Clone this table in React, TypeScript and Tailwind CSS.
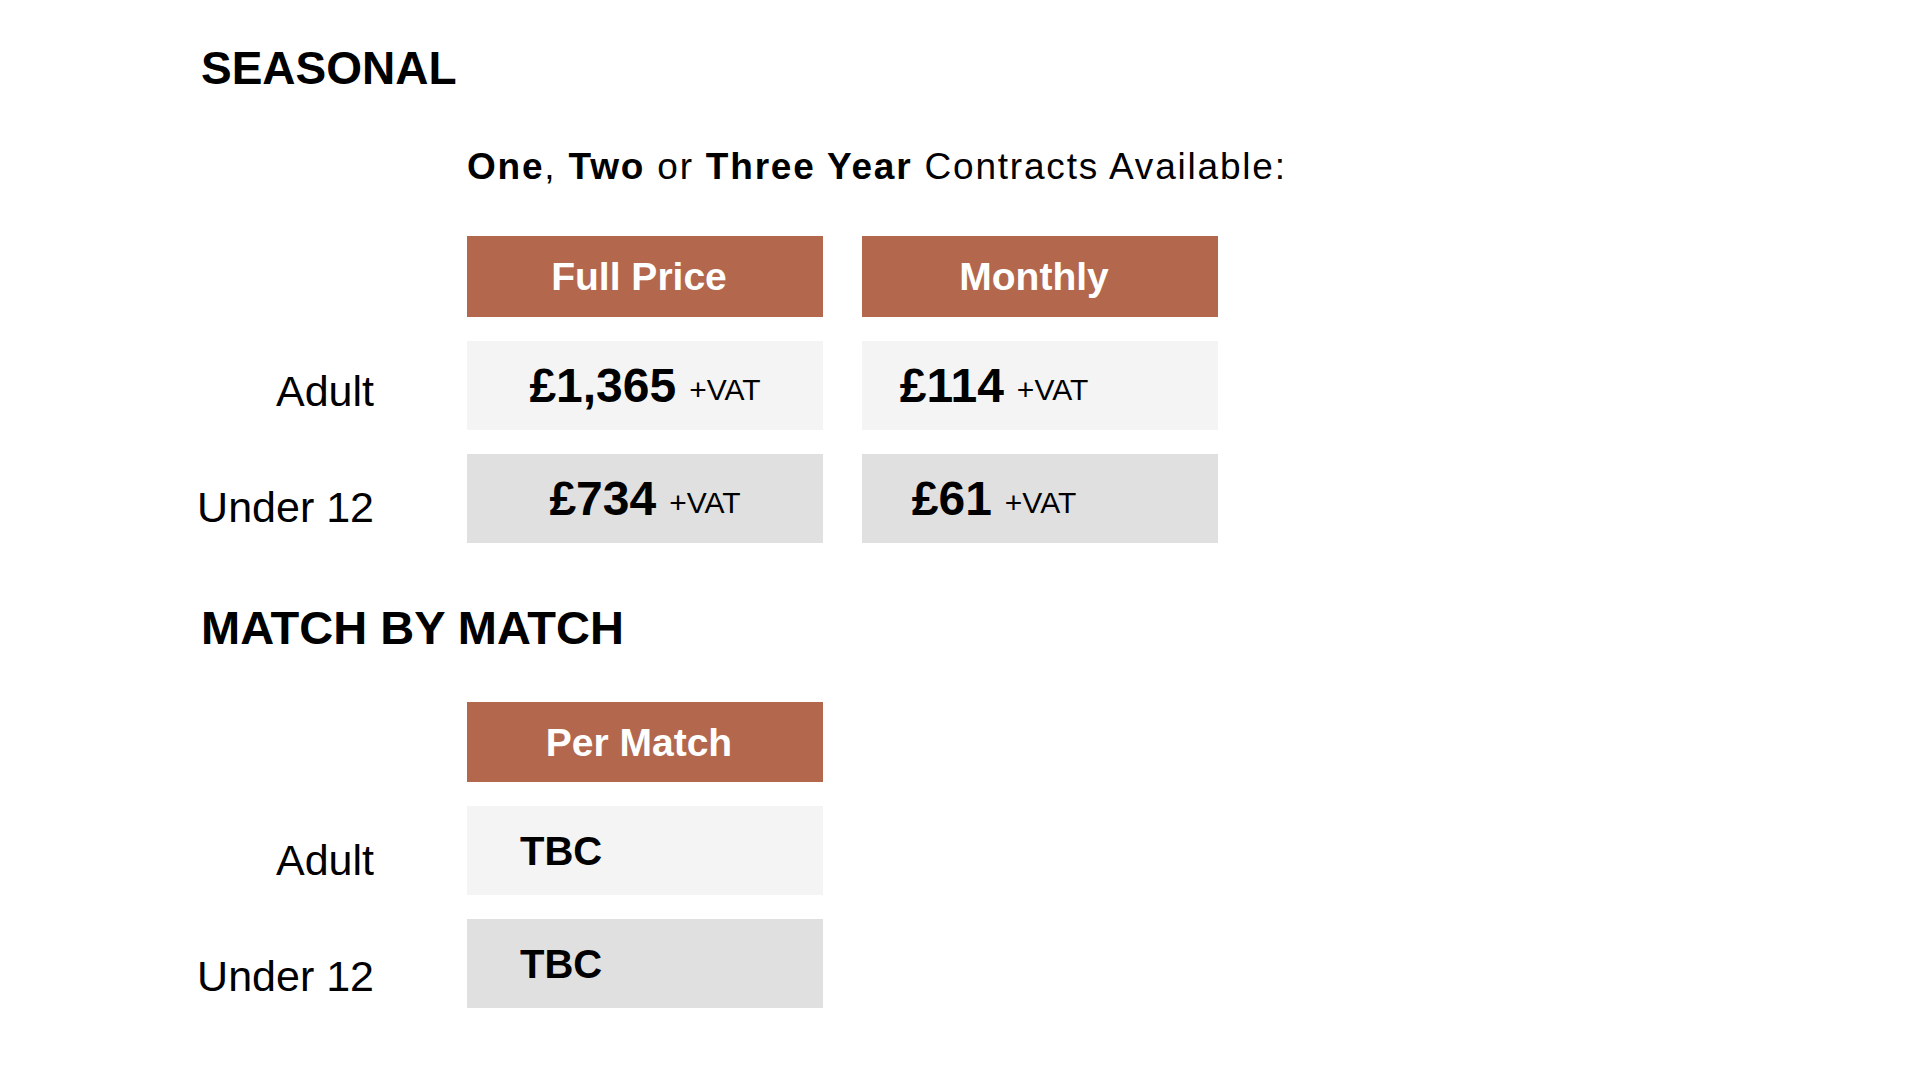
const font = { fontFamily: '"Liberation Sans", Arial, sans-serif' };

type Row = { label: string; labelPad: string; cells: { price: string; vat?: boolean }[]; shade: string };

const seasonalRows: Row[] = [
  {
    label: "Adult",
    labelPad: "pt-[11px]",
    shade: "bg-[#f4f4f4]",
    cells: [{ price: "£1,365", vat: true }, { price: "£114", vat: true }],
  },
  {
    label: "Under 12",
    labelPad: "pt-[18px]",
    shade: "bg-[#e0e0e0]",
    cells: [{ price: "£734", vat: true }, { price: "£61", vat: true }],
  },
];

const matchRows: Row[] = [
  { label: "Adult", labelPad: "pt-[20px]", shade: "bg-[#f4f4f4]", cells: [{ price: "TBC" }] },
  { label: "Under 12", labelPad: "pt-[26px]", shade: "bg-[#e0e0e0]", cells: [{ price: "TBC" }] },
];

const HeaderCell = ({ children, h = "h-[81px]" }: { children: React.ReactNode; h?: string }) => (
  <div className={`w-[356px] ${h} bg-[#b3674d] flex items-center justify-center pr-[12px] text-white text-[39px] font-bold leading-none`}>
    {children}
  </div>
);

const PriceRow = ({ row, tbc }: { row: Row; tbc?: boolean }) => (
  <div className="flex h-[89px]">
    <div className={`w-[266px] shrink-0 pr-[93px] flex items-center justify-end whitespace-nowrap text-[43px] leading-none ${row.labelPad}`}>
      {row.label}
    </div>
    <div className="flex gap-[39px]">
      {row.cells.map((c, i) => (
        <div
          key={i}
          className={`w-[356px] h-[89px] flex items-center ${row.shade} ${
            tbc ? "pl-[53px]" : i === 1 ? "justify-center pr-[92px]" : "justify-center"
          }`}
        >
          <span className={tbc ? "text-[40px] font-bold leading-none" : "text-[48px] font-bold leading-none"}>
            {c.price}
          </span>
          {c.vat && <span className="ml-[13px] text-[30px] leading-none self-center translate-y-[4px]">+VAT</span>}
        </div>
      ))}
    </div>
  </div>
);

export default function App() {
  return (
    <div className="w-[1920px] h-[1080px] bg-white text-black pl-[201px] pt-[45px]" style={font}>
      <h1 className="text-[46px] font-bold leading-none">SEASONAL</h1>

      <p className="mt-[57px] pl-[266px] text-[37px] leading-none tracking-[1.8px]">
        <b>One</b>, <b>Two</b> or <b>Three Year</b> Contracts Available:
      </p>

      <div className="mt-[51px] pl-[266px] flex gap-[39px]">
        <HeaderCell>Full Price</HeaderCell>
        <HeaderCell>Monthly</HeaderCell>
      </div>

      <div className="mt-[24px] flex flex-col gap-[24px]">
        {seasonalRows.map((r) => (
          <PriceRow key={r.label} row={r} />
        ))}
      </div>

      <h2 className="mt-[61px] text-[47px] font-bold leading-none">MATCH BY MATCH</h2>

      <div className="mt-[51px] pl-[266px] flex">
        <HeaderCell h="h-[80px]">Per Match</HeaderCell>
      </div>

      <div className="mt-[24px] flex flex-col gap-[24px]">
        {matchRows.map((r) => (
          <PriceRow key={r.label} row={r} tbc />
        ))}
      </div>
    </div>
  );
}
